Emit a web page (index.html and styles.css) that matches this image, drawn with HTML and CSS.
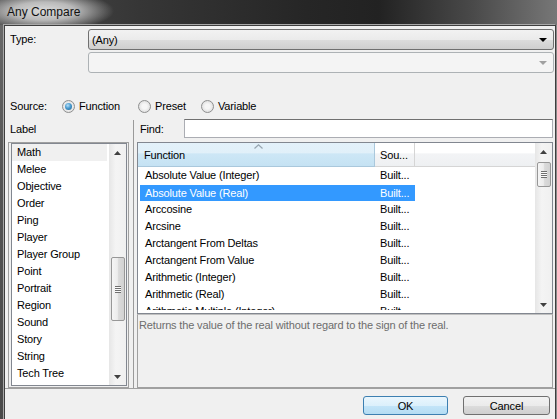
FILE: index.html
```html
<!DOCTYPE html>
<html>
<head>
	<meta charset="UTF-8">
	<title>Any Compare</title>
	<link rel="stylesheet" href="styles.css">
</head>
<body>
<div class="window">
	<div class="titlebar"><span class="title">Any Compare</span></div>
	<div class="client">
		<div class="fields">
			<label class="field-label">Type:</label>
			<div class="combo"><span class="combo-text">(Any)</span><span class="combo-arrow"></span></div>
			<span></span>
			<div class="combo disabled"><span class="combo-text"></span><span class="combo-arrow"></span></div>
		</div>

		<div class="source-row">
			<span class="source-label">Source:</span>
			<label class="option opt-function"><span class="radio checked"></span>Function</label>
			<label class="option opt-preset"><span class="radio"></span>Preset</label>
			<label class="option"><span class="radio"></span>Variable</label>
		</div>

		<div class="main">
			<div class="left-pane">
				<div class="pane-title">Label</div>
				<div class="labelbox">
					<div class="listbox">
						<ul class="items">
							<li class="sel">Math</li>
							<li>Melee</li>
							<li>Objective</li>
							<li>Order</li>
							<li>Ping</li>
							<li>Player</li>
							<li>Player Group</li>
							<li>Point</li>
							<li>Portrait</li>
							<li>Region</li>
							<li>Sound</li>
							<li>Story</li>
							<li>String</li>
							<li>Tech Tree</li>
						</ul>
						<div class="vscroll">
							<div class="sb-btn"><svg width="7" height="4" viewBox="0 0 7 4"><polygon points="0,4 3.5,0 7,4" fill="#404040"/></svg></div>
							<div class="sb-track">
								<div class="thumb left-thumb"><span class="grip"></span></div>
							</div>
							<div class="sb-btn"><svg width="7" height="4" viewBox="0 0 7 4"><polygon points="0,0 7,0 3.5,4" fill="#404040"/></svg></div>
						</div>
					</div>
				</div>
			</div>

			<div class="splitter"></div>

			<div class="right-pane">
				<div class="find-row">
					<label class="find-label">Find:</label>
					<div class="find-input"></div>
				</div>

				<div class="listview">
					<div class="lv-main">
						<div class="lv-header">
							<div class="hcell col-func sorted">Function
								<svg class="sort-arrow" width="9" height="5" viewBox="0 0 9 5"><polyline points="0.5,4.5 4.5,0.8 8.5,4.5" fill="none" stroke="#97a5b0" stroke-width="1.2"/></svg>
							</div>
							<div class="hcell col-src">Sou...</div>
							<div class="hcell col-fill"></div>
						</div>
						<div class="lv-rows">
							<div class="row"><span class="col-func">Absolute Value (Integer)</span><span class="col-src">Built...</span></div>
							<div class="row selected"><span class="col-func">Absolute Value (Real)</span><span class="col-src">Built...</span></div>
							<div class="row"><span class="col-func">Arccosine</span><span class="col-src">Built...</span></div>
							<div class="row"><span class="col-func">Arcsine</span><span class="col-src">Built...</span></div>
							<div class="row"><span class="col-func">Arctangent From Deltas</span><span class="col-src">Built...</span></div>
							<div class="row"><span class="col-func">Arctangent From Value</span><span class="col-src">Built...</span></div>
							<div class="row"><span class="col-func">Arithmetic (Integer)</span><span class="col-src">Built...</span></div>
							<div class="row"><span class="col-func">Arithmetic (Real)</span><span class="col-src">Built...</span></div>
							<div class="row"><span class="col-func">Arithmetic Multiple (Integer)</span><span class="col-src">Built...</span></div>
						</div>
					</div>
					<div class="vscroll">
						<div class="sb-btn"><svg width="7" height="4" viewBox="0 0 7 4"><polygon points="0,4 3.5,0 7,4" fill="#404040"/></svg></div>
						<div class="sb-track">
							<div class="thumb right-thumb"><span class="grip"></span></div>
						</div>
						<div class="sb-btn"><svg width="7" height="4" viewBox="0 0 7 4"><polygon points="0,0 7,0 3.5,4" fill="#404040"/></svg></div>
					</div>
				</div>

				<div class="description">Returns the value of the real without regard to the sign of the real.</div>
			</div>
		</div>

		<div class="buttons">
			<button class="btn default">OK</button>
			<button class="btn cancel">Cancel</button>
		</div>
	</div>
</div>
</body>
</html>
```

FILE: styles.css
```css
* {
	box-sizing: border-box;
}

body {
	margin: 0;
	background-color: #5a5a5a;
	font-family: "Liberation Sans", Arial, sans-serif;
	font-size: 11px;
	letter-spacing: -0.15px;
	color: #000;
}

.window {
	width: 557px;
	height: 419px;
	overflow: hidden;
	background: linear-gradient(180deg, #6c6c6c, #555 40%, #4a4a4a);
	padding: 0 1px 0 4px;
}

.titlebar {
	height: 25px;
	margin: 0 -1px 0 -4px;
	background:
		radial-gradient(ellipse 70px 20px at 44px 11px, rgba(228, 228, 228, 0.95), rgba(215, 215, 215, 0.8) 45%, rgba(200, 200, 200, 0) 100%),
		linear-gradient(90deg, #4a4a4a 0%, #363636 25%, #262626 55%, #222 68%, #4a4a4a 85%, #777 100%);
	padding: 5px 0 0 7px;
}

.title {
	font-size: 12px;
	letter-spacing: 0;
	color: #111;
}

.client {
	height: 400px;
	background-color: #f0f0f0;
	border: 1px solid #3e3e3e;
	border-bottom: none;
	box-shadow: -1px -1px 0 #a9a9a9, 1px 0 0 #8a8a8a;
}

/* type combos */
.fields {
	display: grid;
	grid-template-columns: 83px 1fr;
	row-gap: 2px;
	margin-top: 3px;
	padding-right: 1px;
}

.field-label {
	padding-left: 5px;
	line-height: 21px;
}

.combo {
	height: 21px;
	display: flex;
	align-items: center;
	justify-content: space-between;
	border: 1px solid #707070;
	border-radius: 3px;
	background: linear-gradient(180deg, #f2f2f2 0%, #ebebeb 50%, #dddddd 50%, #cfcfcf 100%);
	padding: 0 6px 0 3px;
}

.combo-arrow {
	width: 0;
	height: 0;
	border-left: 4px solid transparent;
	border-right: 4px solid transparent;
	border-top: 4px solid #000;
}

.combo.disabled {
	border-color: #adb2b5;
	background: #f4f4f4;
}

.combo.disabled .combo-arrow {
	border-top-color: #a0a0a0;
}

/* source radios */
.source-row {
	display: flex;
	align-items: center;
	height: 16px;
	margin-top: 25px;
	padding-left: 5px;
}

.source-label {
	width: 52px;
}

.option {
	display: flex;
	align-items: center;
	gap: 4px;
}

.opt-function {
	width: 76px;
}

.opt-preset {
	width: 63px;
}

.radio {
	position: relative;
	width: 13px;
	height: 13px;
	border-radius: 50%;
	border: 1px solid #8e8f8f;
	background: radial-gradient(circle at 50% 50%, #f6f6f6 30%, #d4d4d4 100%);
}

.radio.checked::after {
	content: "";
	position: absolute;
	left: 2px;
	top: 2px;
	width: 7px;
	height: 7px;
	border-radius: 50%;
	background: radial-gradient(circle at 40% 35%, #b7e0f8 0%, #4a9bd0 45%, #1b5e8a 100%);
}

/* main split area */
.main {
	display: flex;
	height: 272px;
	margin-top: 3px;
	padding-left: 3px;
	border-bottom: 1px solid #a0a0a0;
}

.left-pane {
	width: 121px;
	display: flex;
	flex-direction: column;
}

.pane-title {
	height: 25px;
	padding: 5px 0 0 2px;
	line-height: 14px;
}

.labelbox {
	flex: 1;
	border: 1px solid #a0a0a0;
	padding: 0 1px 1px 2px;
}

.listbox {
	height: 100%;
	display: flex;
	border: 1px solid #828790;
	background-color: #fff;
}

.items {
	flex: 1;
	list-style: none;
	margin: 0;
	padding: 0;
}

.items li {
	height: 17px;
	line-height: 17px;
	padding-left: 5px;
	margin-right: 2px;
}

.items li.sel {
	background-color: #f0f0f0;
}

.vscroll {
	width: 17px;
	display: flex;
	flex-direction: column;
	background: linear-gradient(90deg, #e6e6e6, #f4f4f4 40%, #f0f0f0);
}

.sb-btn {
	height: 17px;
	display: flex;
	align-items: center;
	justify-content: center;
}

.sb-btn svg {
	display: block;
}

.sb-track {
	flex: 1;
	padding: 0 1px 0 2px;
}

.thumb {
	display: flex;
	align-items: center;
	justify-content: center;
	border: 1px solid #979797;
	border-radius: 2px;
	background: linear-gradient(90deg, #f5f5f5 0%, #ececec 45%, #dadada 55%, #d2d2d2 100%);
}

.left-thumb {
	margin-top: 96px;
	height: 64px;
}

.right-thumb {
	margin-top: 2px;
	height: 25px;
}

.grip {
	width: 6px;
	height: 7px;
	background: repeating-linear-gradient(180deg, #6f6f6f 0, #6f6f6f 1px, #fafafa 1px, #fafafa 2px);
}

.splitter {
	width: 8px;
	margin-top: 3px;
	background: linear-gradient(90deg, transparent 4px, #9a9a9a 4px, #9a9a9a 5px, transparent 5px);
}

.right-pane {
	width: 416px;
	display: flex;
	flex-direction: column;
}

.find-row {
	display: flex;
	height: 19px;
	margin-top: 2px;
	align-items: center;
}

.find-label {
	width: 47px;
	padding-left: 3px;
}

.find-input {
	flex: 1;
	height: 19px;
	border: 1px solid #abadb3;
	border-top-color: #707070;
	background-color: #fff;
}

.listview {
	display: flex;
	height: 172px;
	margin-top: 4px;
	border: 1px solid #828790;
	background-color: #fff;
}

.lv-main {
	flex: 1;
	overflow: hidden;
}

.lv-header {
	display: flex;
	height: 24px;
}

.hcell {
	position: relative;
	line-height: 24px;
	padding-left: 6px;
	border-right: 1px solid #d5d5d5;
	border-bottom: 1px solid #d5d5d5;
	background: linear-gradient(180deg, #ffffff 0%, #ffffff 45%, #f3f4f6 46%, #eef0f2 100%);
}

.hcell.sorted {
	background: linear-gradient(180deg, #e3f1fa 0%, #e1f0f9 45%, #cde7f6 46%, #c5e2f3 100%);
	border-right-color: #aac8dc;
	border-bottom-color: #aac8dc;
}

.sort-arrow {
	position: absolute;
	left: 116px;
	top: 1px;
}

.col-func {
	width: 237px;
	padding-left: 6px;
}

.col-src {
	width: 40px;
	padding-left: 5px;
}

.col-fill {
	flex: 1;
	border-right: none;
}

.lv-rows {
	height: 143px;
	overflow: hidden;
}

.row {
	display: flex;
	height: 17px;
	line-height: 17px;
}

.row span {
	display: block;
	white-space: nowrap;
	overflow: hidden;
}

.row .col-func {
	padding-left: 7px;
}

.row.selected {
	width: 275px;
	margin-left: 2px;
	color: #fff;
	background-color: #3399ff;
	background-clip: content-box;
	padding-top: 1px;
	line-height: 16px;
}

.row.selected .col-func {
	width: 235px;
	padding-left: 5px;
}

.description {
	flex: 1;
	padding: 3px 1px;
	line-height: 14px;
	color: #6d6d6d;
	border: 1px solid #a0a0a0;
	border-top: 1px solid #c0c0c0;
	white-space: nowrap;
	overflow: hidden;
}

.buttons {
	display: flex;
	justify-content: flex-end;
	gap: 15px;
	margin-top: 7px;
	padding-right: 5px;
}

.btn {
	height: 19px;
	width: 85px;
	font-family: "Liberation Sans", Arial, sans-serif;
	font-size: 11px;
	letter-spacing: -0.15px;
	color: #000;
	border: 1px solid #707070;
	border-radius: 3px;
	background: linear-gradient(180deg, #f2f2f2 0%, #ebebeb 50%, #dddddd 50%, #cfcfcf 100%);
	padding: 0;
}

.btn.default {
	border-color: #3c7fb1;
	background: linear-gradient(180deg, #eaf6fd 0%, #dcf0fb 50%, #c4e5f8 50%, #b4dcf3 100%);
}

.btn.cancel {
	width: 87px;
}
```
